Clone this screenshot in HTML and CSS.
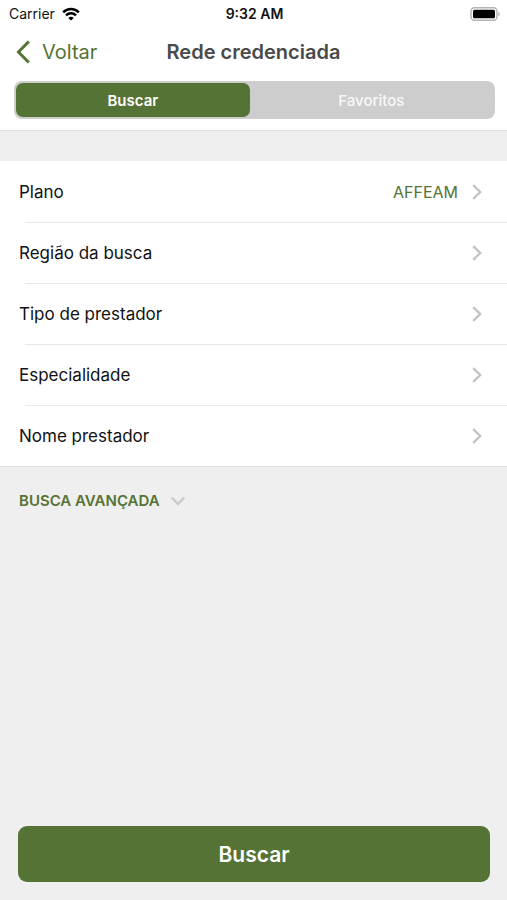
FILE: index.html
```html
<!DOCTYPE html>
<html lang="pt-BR">
<head>
<meta charset="utf-8">
<meta name="viewport" content="width=device-width, initial-scale=1">
<title>Rede credenciada</title>
<link rel="stylesheet" href="styles.css">
</head>
<body>
<div class="screen">
  <header class="top">
    <div class="status">
      <div class="carrier">
        <span>Carrier</span>
        <svg class="wifi" viewBox="0 0 18 14" aria-hidden="true"><path d="M1.200 5.400C5.500 0.900 12.500 0.900 16.800 5.400" /><path d="M4 8.400C6.800 5.600 11.200 5.600 14 8.400" /><path class="dot" d="M6.300 10.900Q9 8.700 11.700 10.900L9 13.600Z" /></svg>
      </div>
      <span class="time">9:32 AM</span>
      <svg class="battery" viewBox="0 0 30 14" aria-hidden="true"><rect class="shell" x="1" y="0.750" width="26" height="12.500" rx="3.500" /><rect x="3" y="2.700" width="22" height="8.600" rx="1.500" /><path class="cap" d="M28.400 4.700q1.500.7 1.500 2.300t-1.500 2.300z" /></svg>
    </div>
    <div class="nav">
      <a class="back" href="#"><svg viewBox="0 0 14 24" aria-hidden="true"><path d="M12.800 1.500L2.500 12l10.300 10.500" /></svg>Voltar</a>
      <h1>Rede credenciada</h1>
    </div>
    <div class="segments">
      <button class="segment active" type="button">Buscar</button>
      <button class="segment" type="button">Favoritos</button>
    </div>
  </header>
  <main>
    <div class="list">
      <button class="row" type="button"><span class="label">Plano</span><span class="value">AFFEAM</span><svg class="chevron" viewBox="0 0 10 16" aria-hidden="true"><path d="M1.200 1.200L8.200 8l-7 6.800" /></svg></button>
      <button class="row" type="button"><span class="label">Região da busca</span><svg class="chevron" viewBox="0 0 10 16" aria-hidden="true"><path d="M1.200 1.200L8.200 8l-7 6.800" /></svg></button>
      <button class="row" type="button"><span class="label">Tipo de prestador</span><svg class="chevron" viewBox="0 0 10 16" aria-hidden="true"><path d="M1.200 1.200L8.200 8l-7 6.800" /></svg></button>
      <button class="row" type="button"><span class="label">Especialidade</span><svg class="chevron" viewBox="0 0 10 16" aria-hidden="true"><path d="M1.200 1.200L8.200 8l-7 6.800" /></svg></button>
      <button class="row" type="button"><span class="label">Nome prestador</span><svg class="chevron" viewBox="0 0 10 16" aria-hidden="true"><path d="M1.200 1.200L8.200 8l-7 6.800" /></svg></button>
    </div>
    <button class="advanced" type="button">BUSCA AVANÇADA<svg viewBox="0 0 14 10" aria-hidden="true"><path d="M0.800 1.500L7 8l6.200-6.500" /></svg></button>
  </main>
  <footer><button class="submit" type="button">Buscar</button></footer>
</div>
</body>
</html>
```
FILE: styles.css
```css
* { box-sizing: border-box; }
body { margin: 0; background: #efefef; color: #111; font-family: Inter, "Liberation Sans", sans-serif; }
button { margin: 0; border: 0; background: none; color: inherit; font: inherit; cursor: pointer; }
h1 { margin: 0; }
svg { display: block; flex: none; fill: none; }
.screen { display: flex; flex-direction: column; min-height: 100vh; }
.top { padding-bottom: 11px; background: #fff; border-bottom: 1px solid #dedede; }
.status { display: grid; grid-template-columns: 1fr auto 1fr; align-items: center; height: 27px; padding: 0 7px 0 9px; font-size: 14px; }
.carrier { display: flex; align-items: center; gap: 7px; }
.wifi { width: 18px; height: 14px; stroke: #000; stroke-width: 2.4; }
.wifi .dot { fill: #000; stroke: none; }
.time { font-weight: 600; }
.battery { justify-self: end; width: 30px; height: 14px; fill: #000; }
.battery .shell { fill: none; stroke: #b5b5b5; stroke-width: 1.5; }
.battery .cap { fill: #b5b5b5; }
.nav { display: grid; grid-template-columns: 1fr auto 1fr; align-items: center; height: 50px; padding: 0 16px; }
.nav h1 { color: #4a4a4a; font-size: 20px; font-weight: 600; }
.back { display: flex; align-items: center; gap: 12px; color: #557334; font-size: 20px; text-decoration: none; }
.back svg { width: 14px; height: 24px; stroke: #557334; stroke-width: 3; }
.segments { display: grid; grid-template-columns: 49fr 51fr; margin: 4px 12px 0 14px; padding: 2px; border-radius: 8px; background: #cdcdcd; }
.segment { height: 34px; padding: 0; border-radius: 7px; color: #f8f8f8; font-size: 15px; font-weight: 500; }
.segment.active { background: #557334; color: #fff; font-weight: 600; }
main { flex: 1; padding-top: 30px; }
.list { border-bottom: 1px solid #e2e2e2; background: #fff; }
.row { position: relative; display: flex; align-items: center; gap: 14px; width: 100%; height: 61px; padding: 0 25px 0 19px; font-size: 17px; text-align: left; }
.row + .row::before { content: ""; position: absolute; top: 0; right: 0; left: 25px; height: 1px; background: #e9e9e9; }
.label { flex: 1; }
.value { color: #557334; font-size: 16px; }
.chevron { width: 10px; height: 16px; stroke: #c4c4c4; stroke-width: 2.4; }
.advanced { display: flex; align-items: center; gap: 11px; padding: 24px 19px; color: #557334; font-size: 15px; font-weight: 600; }
.advanced svg { width: 14px; height: 10px; stroke: #cbcbcb; stroke-width: 2.4; }
footer { padding: 0 17px 18px 18px; }
.submit { display: block; width: 100%; height: 56px; border-radius: 9px; background: #557334; color: #fff; font-size: 21px; font-weight: 600; }
```
